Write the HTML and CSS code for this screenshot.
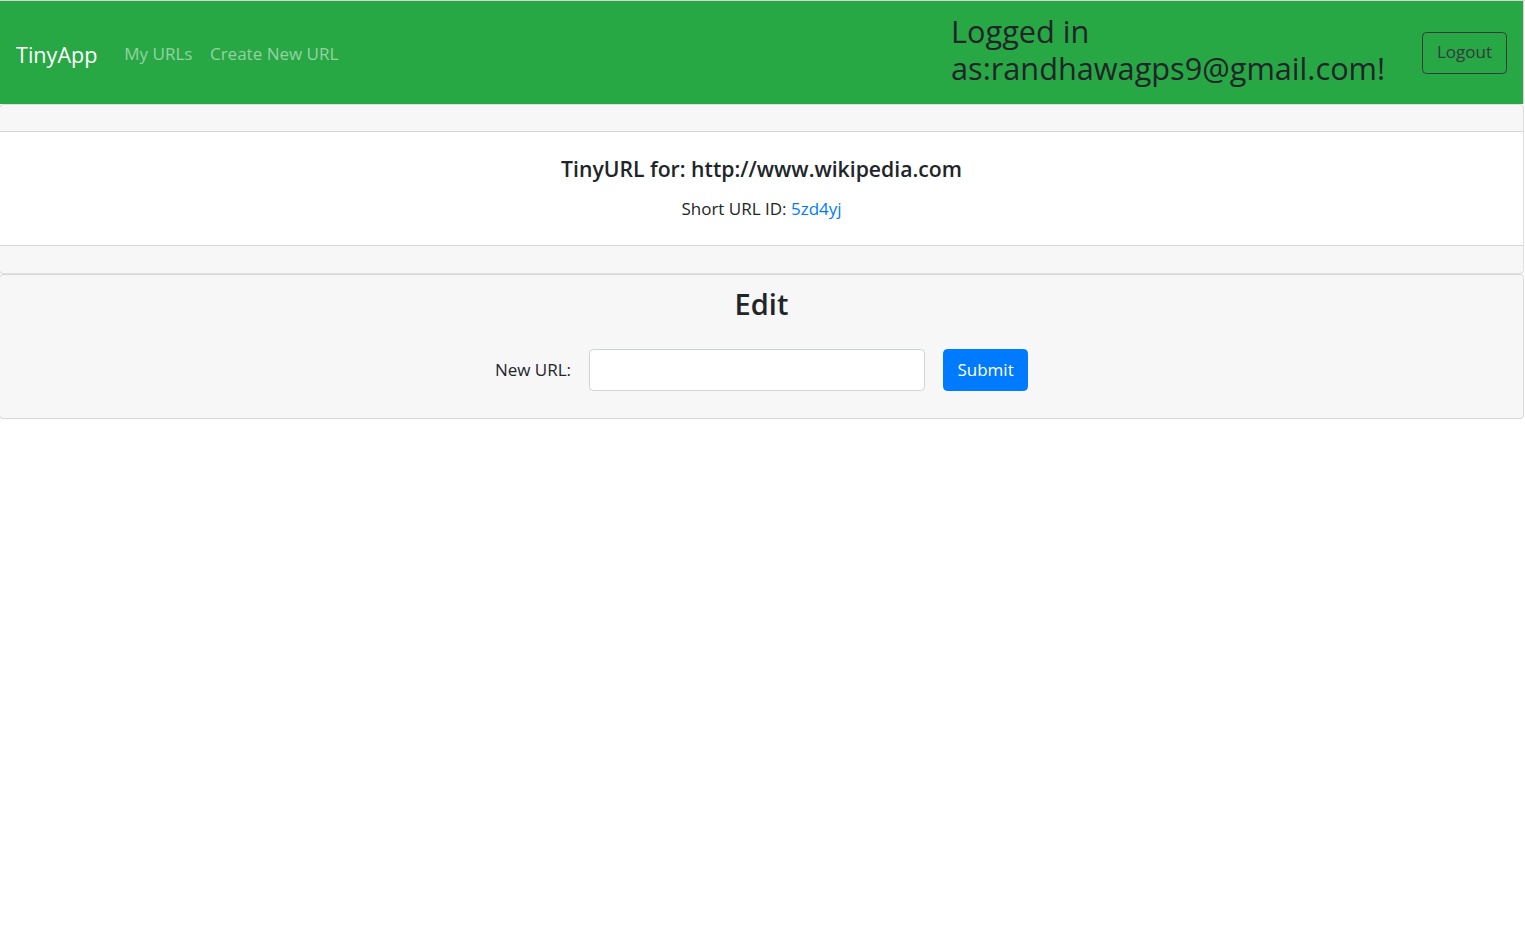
FILE: index.html
```html
<!DOCTYPE html>
<html lang="en">
<head>
<meta charset="utf-8">
<title>TinyApp</title>
<link rel="stylesheet" href="styles.css">
</head>
<body>
<div class="page">
  <nav class="navbar">
    <div class="nav-left">
      <a class="brand" href="#">TinyApp</a>
      <a class="nav-link" href="#">My URLs</a>
      <a class="nav-link" href="#">Create New URL</a>
    </div>
    <div class="nav-right">
      <h2 class="login">Logged in as:randhawagps9@gmail.com!</h2>
      <button class="btn btn-outline-dark" type="button">Logout</button>
    </div>
  </nav>

  <div class="card">
    <div class="card-header"></div>
    <div class="card-body">
      <h5 class="card-title">TinyURL for: http://www.wikipedia.com</h5>
      <p class="card-text">Short URL ID: <a class="link" href="#">5zd4yj</a></p>
    </div>
    <div class="card-footer"></div>
  </div>

  <div class="card card-light">
    <div class="card-body">
      <h3 class="edit-title">Edit</h3>
      <form class="edit-form">
        <label class="form-label" for="newurl">New URL:</label>
        <input class="form-control" id="newurl" type="text">
        <button class="btn btn-primary" type="submit">Submit</button>
      </form>
    </div>
  </div>
</div>
</body>
</html>
```

FILE: styles.css
```css
* { box-sizing: border-box; }
html, body { margin: 0; padding: 0; background: #fff; }
body {
  font-family: "Open Sans", "Noto Sans", "Liberation Sans", sans-serif;
  font-size: 17px;
  line-height: 26.4px;
  color: #212529;
}
.page {
  width: 1525px;
  border-top: 1px solid #d6d6d6;
  overflow: hidden;
}
a { text-decoration: none; }

.navbar {
  width: 1524px;
  background: #28a745;
  border-right: 1px solid #d6d6d6;
  padding: 0 16px 0 16px;
  display: flex;
  align-items: center;
  justify-content: space-between;
  height: 103px;
}
.nav-left { display: flex; align-items: center; padding-top: 3px; }
.brand {
  color: #fff;
  font-size: 21.6px;
  line-height: 33px;
  margin-right: 18px;
}
.nav-link {
  color: rgba(255, 255, 255, 0.5);
  font-size: 17px;
  padding: 8.8px 8.8px;
}
.nav-right { display: flex; align-items: center; }
.login {
  margin: 0 21px 6px 0;
  width: 450px;
  font-size: 30.7px;
  line-height: 37px;
  font-weight: 400;
  color: #212529;
}
.btn {
  font-family: inherit;
  font-size: 17px;
  line-height: 26.4px;
  padding: 6.6px 13.2px;
  border-radius: 4.4px;
  border: 1px solid transparent;
  cursor: pointer;
}
.btn-outline-dark {
  background: transparent;
  border-color: #343a40;
  color: #343a40;
  width: 85px;
  height: 42px;
}

.card {
  width: 1525px;
  margin-left: -1px;
  border: 1px solid rgba(0, 0, 0, 0.125);
  border-radius: 4.4px;
  background: #fff;
}
.card-header {
  height: 27px;
  background: rgba(0, 0, 0, 0.03);
  border-bottom: 1px solid rgba(0, 0, 0, 0.125);
}
.card-footer {
  height: 28px;
  background: rgba(0, 0, 0, 0.03);
  border-top: 1px solid rgba(0, 0, 0, 0.125);
}
.card-body {
  padding: 24px 22px 23px;
  text-align: center;
}
.card-title {
  margin: 0 0 13.2px;
  font-size: 21.2px;
  line-height: 26.4px;
  font-weight: 600;
}
.card-text { margin: 0; }
.link { color: #007bff; }

.card-light { background: #f7f7f7; }
.card-light .card-body { padding: 10px 22px 27px; }
.edit-title {
  margin: 0 0 27px;
  font-size: 29px;
  line-height: 37px;
  font-weight: 600;
}
.edit-form {
  display: flex;
  justify-content: center;
  align-items: center;
  gap: 18px;
}
.form-label { font-size: 17px; }
.form-control {
  width: 336px;
  height: 42px;
  border: 1px solid #ced4da;
  border-radius: 4.4px;
  background: #fff;
  font-family: inherit;
  font-size: 17px;
  padding: 6.6px 13.2px;
}
.btn-primary {
  background: #007bff;
  border-color: #007bff;
  color: #fff;
  width: 85px;
  height: 42px;
}
```
